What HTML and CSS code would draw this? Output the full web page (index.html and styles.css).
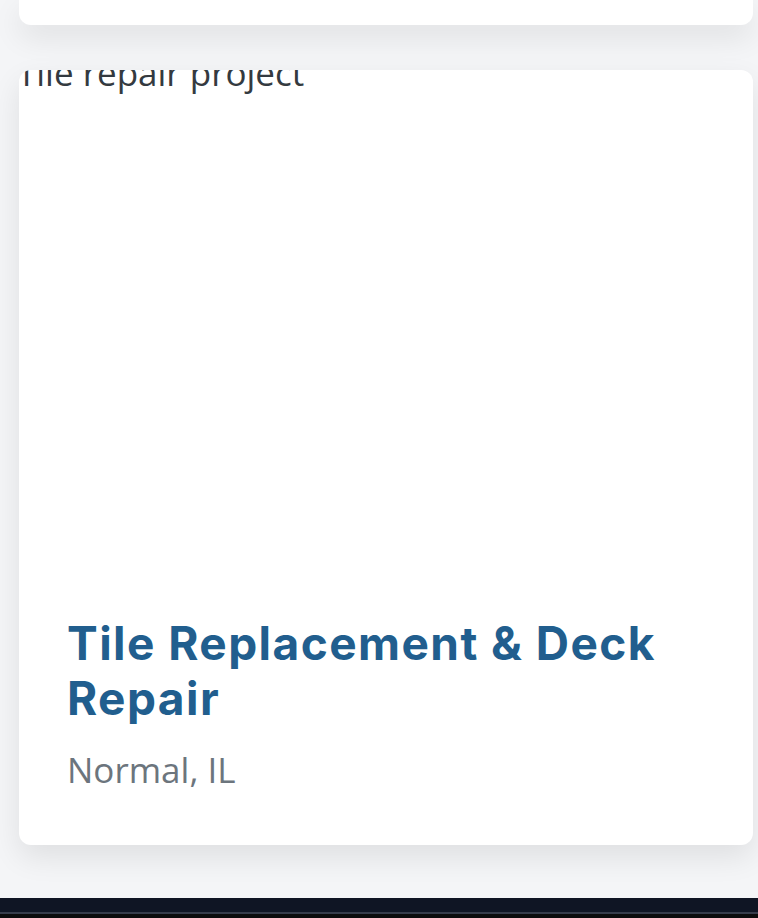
FILE: index.html
```html
<!DOCTYPE html>
<html lang="en">
<head>
<meta charset="utf-8">
<title>Projects</title>
<link rel="stylesheet" href="styles.css">
</head>
<body>
<main class="list">
  <article class="card card-prev"></article>
  <article class="card">
    <div class="media"><span class="alt">Tile repair project</span></div>
    <div class="card-body">
      <h3 class="card-title">Tile Replacement &amp; Deck Repair</h3>
      <p class="card-loc">Normal, IL</p>
    </div>
  </article>
</main>
<footer class="footer"><div class="footer-line"></div></footer>
</body>
</html>
```
FILE: styles.css
```css
html, body {
  margin: 0;
  padding: 0;
}
body {
  background: #f4f5f7;
  font-family: "Open Sans", "Liberation Sans", sans-serif;
  height: 918px;
  overflow: hidden;
  display: flex;
  flex-direction: column;
}
.list {
  display: flex;
  flex-direction: column;
  gap: 45px;
  padding: 0 5px 53px 19px;
}
.card {
  background: #ffffff;
  border-radius: 12px;
  box-shadow: 0 12px 30px rgba(0, 0, 0, 0.09);
  overflow: hidden;
  display: flex;
  flex-direction: column;
}
.card-prev {
  height: 25px;
  border-radius: 0 0 12px 12px;
}
.media {
  height: 500px;
  overflow: hidden;
}
.alt {
  display: block;
  margin: -21px 0 0 -2px;
  font-family: "Open Sans", sans-serif;
  font-size: 35px;
  line-height: normal;
  color: #343a40;
  white-space: nowrap;
}
.card-body {
  padding: 46px 48px 48px 48px;
}
.card-title {
  margin: 0;
  font-family: Inter, "Open Sans", sans-serif;
  font-weight: 700;
  font-size: 46px;
  line-height: 55px;
  letter-spacing: 1.45px;
  color: #215e8e;
}
.card-loc {
  margin: 18px 0 0 0;
  font-family: "Open Sans", sans-serif;
  font-size: 35px;
  line-height: 1.5;
  color: #6c757d;
}
.footer {
  flex: 1;
  background: #0f1524;
  display: flex;
  flex-direction: column;
  padding-top: 14px;
}
.footer-line {
  height: 2px;
  background: #363c4b;
}
.footer::after {
  content: "";
  flex: 1;
  background: #0b0b0c;
}
```
